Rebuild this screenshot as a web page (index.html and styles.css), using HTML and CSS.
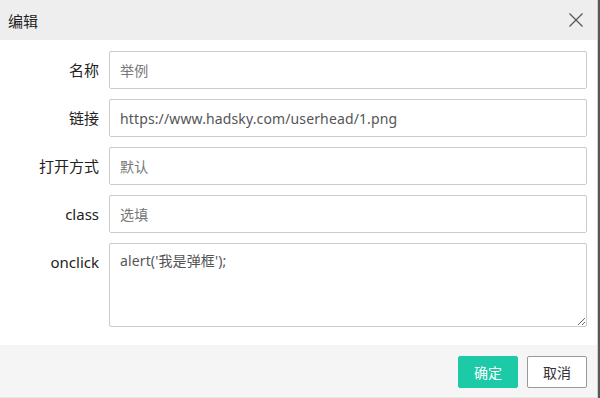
FILE: index.html
```html
<!DOCTYPE html>
<html lang="zh-CN">

<head>
    <meta charset="UTF-8">
    <meta name="viewport" content="width=device-width, initial-scale=1.0">
    <title>编辑</title>
    <link rel="stylesheet" href="styles.css">
</head>

<body>
    <div class="dialog">
        <div class="dialog-header">
            <span class="dialog-title">编辑</span>
            <span class="dialog-close" title="关闭">
                <svg width="14" height="14" viewBox="0 0 14 14">
                    <path d="M0.5 0.5L13.5 13.5M13.5 0.5L0.5 13.5" stroke="#555" stroke-width="1.2" fill="none" />
                </svg>
            </span>
        </div>
        <form class="dialog-body">
            <div class="form-row">
                <label class="form-label" for="name">名称</label>
                <input class="form-input" id="name" type="text" placeholder="举例">
            </div>
            <div class="form-row">
                <label class="form-label" for="link">链接</label>
                <input class="form-input" id="link" type="text" value="https://www.hadsky.com/userhead/1.png">
            </div>
            <div class="form-row">
                <label class="form-label" for="target">打开方式</label>
                <input class="form-input" id="target" type="text" placeholder="默认">
            </div>
            <div class="form-row">
                <label class="form-label" for="cls">class</label>
                <input class="form-input" id="cls" type="text" placeholder="选填">
            </div>
            <div class="form-row">
                <label class="form-label" for="onclick">onclick</label>
                <textarea class="form-input form-textarea" id="onclick">alert('我是弹框');</textarea>
            </div>
        </form>
        <div class="dialog-footer">
            <button class="btn btn-primary" type="button">确定</button>
            <button class="btn btn-default" type="button">取消</button>
        </div>
    </div>
</body>

</html>
```

FILE: styles.css
```css
body {
    margin: 0;
    padding: 0;
    background-color: #585858;
    font-family: "Noto Sans", "Noto Sans CJK SC", sans-serif;
    color: #333;
}

.dialog {
    width: 597px;
    height: 397px;
    background-color: #fff;
    border-right: 1px solid #d0d0d0;
    border-bottom: 1px solid #e6e6e6;
    display: flex;
    flex-direction: column;
}

.dialog-header {
    height: 40px;
    background-color: #eee;
    display: flex;
    align-items: center;
    justify-content: space-between;
    padding: 0 14px 0 8px;
}

.dialog-title {
    font-size: 15px;
    color: #222;
}

.dialog-close {
    display: flex;
    width: 14px;
    height: 14px;
    cursor: pointer;
}

.dialog-body {
    margin: 0;
    padding: 11px 10px 18px 0;
    display: flex;
    flex-direction: column;
    gap: 10px;
}

.form-row {
    display: flex;
    align-items: flex-start;
    gap: 10px;
}

.form-label {
    width: 99px;
    flex-shrink: 0;
    text-align: right;
    line-height: 38px;
    font-size: 15px;
    color: #222;
}

.form-input {
    flex: 1;
    height: 38px;
    box-sizing: border-box;
    border: 1px solid #ccc;
    border-radius: 2px;
    padding: 0 10px;
    font-family: "Noto Sans", "Noto Sans CJK SC", sans-serif;
    font-size: 14px;
    letter-spacing: 0.13px;
    color: #555;
    outline: none;
}

.form-input::placeholder {
    color: #777;
}

.form-textarea {
    height: 84px;
    padding: 7px 10px;
    line-height: 20px;
    resize: both;
}

.dialog-footer {
    flex: 1;
    background-color: #f5f5f5;
    display: flex;
    justify-content: flex-end;
    align-items: flex-start;
    gap: 9px;
    padding: 11px 10px 0 0;
}

.btn {
    height: 32px;
    width: 60px;
    box-sizing: border-box;
    border-radius: 2px;
    font-family: "Noto Sans", "Noto Sans CJK SC", sans-serif;
    font-size: 14px;
    cursor: pointer;
    padding: 0;
}

.btn-primary {
    background-color: #1ccaa7;
    border: 1px solid #1ccaa7;
    color: #fff;
}

.btn-default {
    background-color: #fff;
    border: 1px solid #999;
    color: #333;
}
```
